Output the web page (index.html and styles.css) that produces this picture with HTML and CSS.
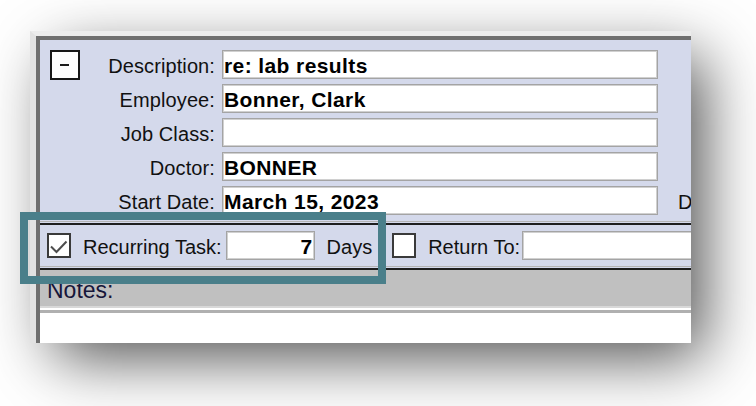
FILE: index.html
```html
<!DOCTYPE html>
<html lang="en">
<head>
<meta charset="utf-8">
<title>Task</title>
<link rel="stylesheet" href="styles.css">
</head>
<body>
<div class="stage">
  <div class="window">
    <div class="frame">
      <div class="details">
        <div class="collapse"><span class="minus"></span></div>
        <div class="lbl">Description:</div>
        <div class="field">re: lab results</div>

        <div class="lbl">Employee:</div>
        <div class="field">Bonner, Clark</div>

        <div class="lbl">Job Class:</div>
        <div class="field"></div>

        <div class="lbl">Doctor:</div>
        <div class="field">BONNER</div>

        <div class="lbl">Start Date:</div>
        <div class="field">March 15, 2023</div>
        <div class="side">Due Date:</div>
      </div>
      <div class="rule rule-top"></div>
      <div class="taskbar">
        <div class="check">
          <svg viewBox="0 0 20 21" width="20" height="21"><polyline points="2,11.5 7.5,17 17.5,6.5" fill="none" stroke="#4d4d4d" stroke-width="2"/></svg>
        </div>
        <div class="lbl2 gap-l">Recurring Task:</div>
        <div class="field num">7</div>
        <div class="lbl2 days">Days</div>
        <div class="check check-return"></div>
        <div class="lbl2 gap-l">Return To:</div>
        <div class="field return-field"></div>
      </div>
      <div class="rule rule-bottom"></div>
      <div class="notes">Notes:</div>
      <div class="notes-edge"></div>
      <div class="notes-body"></div>
    </div>
  </div>
  <div class="highlight"></div>
</div>
</body>
</html>
```
FILE: styles.css
```css
* { box-sizing: border-box; }

html, body {
  margin: 0;
  padding: 0;
  background: #ffffff;
}

body {
  width: 756px;
  height: 406px;
  overflow: hidden;
  font-family: "Liberation Sans", Arial, sans-serif;
  color: #111;
}

.stage {
  position: relative;
  width: 756px;
  height: 406px;
  padding: 31px 0 0 30px;
}

.window {
  width: 661px;
  height: 312px;
  overflow: hidden;
  background: #e6e6e6;
  border-top: 5px solid #ececec;
  border-left: 6px solid #e2e2e2;
  box-shadow: 18px 20px 60px -6px rgba(0, 0, 0, 0.7);
}

.frame {
  height: 100%;
  background: #d4d9eb;
  border-top: 4px solid #6f6f6f;
  border-left: 4px solid #6f6f6f;
}

.details {
  display: grid;
  grid-template-columns: 30px 142px 436px auto;
  grid-auto-rows: 29px;
  row-gap: 5px;
  padding: 10px 0 5px 10px;
}

.collapse {
  width: 30px;
  height: 30px;
  border: 2px solid #151515;
  background: #fcfcfc;
  display: flex;
  align-items: center;
  justify-content: center;
}

.minus {
  width: 9px;
  height: 2px;
  background: #1a1a1a;
  margin-right: 2px;
}

.lbl {
  grid-column: 2;
  text-align: right;
  padding: 3px 7px 0 0;
  font-size: 20px;
  letter-spacing: 0.1px;
  line-height: 26px;
  white-space: nowrap;
  color: #111;
}

.side {
  padding: 3px 0 0 20px;
  font-size: 20px;
  line-height: 26px;
  white-space: nowrap;
  color: #111;
}

.field {
  height: 29px;
  background: #ffffff;
  border: 1px solid #a4a4a4;
  box-shadow: inset 0 0 0 1px #d0d0d0;
  padding: 4px 0 0 1px;
  font-size: 21px;
  line-height: 22px;
  font-weight: bold;
  letter-spacing: 0.4px;
  color: #000;
  white-space: nowrap;
  overflow: hidden;
}

.rule {
  height: 5px;
}

.rule-top {
  background: linear-gradient(to bottom, transparent 0 1px, #b4b4b4 1px 2px, transparent 2px 3px, #1e1e1e 3px 5px);
}

.rule-bottom {
  height: 4px;
  background: linear-gradient(to bottom, #b4b4b4 0 1px, #d4d9eb 1px 2px, #1e1e1e 2px 4px);
}

.taskbar {
  display: flex;
  align-items: center;
  height: 41px;
  padding-left: 7px;
}

.check {
  flex: none;
  width: 24px;
  height: 25px;
  border: 2px solid #3a3a3a;
  background: #ffffff;
}

.check svg {
  display: block;
}

.check-return {
  margin-left: 20px;
}

.lbl2 {
  height: 29px;
  padding-top: 3px;
  font-size: 20px;
  line-height: 26px;
  white-space: nowrap;
  color: #111;
}

.gap-l {
  margin-left: 12px;
}

.num {
  flex: none;
  width: 89px;
  margin-left: 4px;
  text-align: right;
  padding-right: 1px;
}

.days {
  margin-left: 12px;
}

.return-field {
  flex: none;
  width: 230px;
  margin-left: 2px;
}

.notes {
  height: 36px;
  background: #c0c0c0;
  padding: 5px 0 0 7px;
  font-size: 23px;
  line-height: 31px;
  color: #16163a;
}

.notes-edge {
  height: 7px;
  background: linear-gradient(to bottom, #d8d8d8 0 2px, #ffffff 2px 4px, #b0b0b0 4px 7px);
}

.notes-body {
  height: 40px;
  background: #ffffff;
}

.highlight {
  position: absolute;
  left: 20px;
  top: 212px;
  width: 366px;
  height: 72px;
  border: 8px solid #4a7f8a;
}
```
